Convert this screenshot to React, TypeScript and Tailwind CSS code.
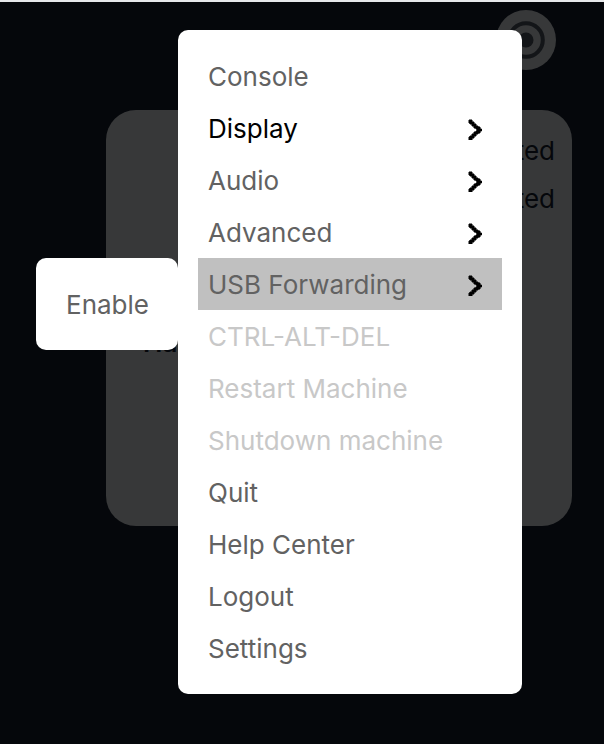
type Entry = {
  label: string;
  tone?: "active" | "disabled";
  arrow?: boolean;
  submenu?: string[];
};

const ENTRIES: Entry[] = [
  { label: "Console" },
  { label: "Display", tone: "active", arrow: true },
  { label: "Audio", arrow: true },
  { label: "Advanced", arrow: true },
  { label: "USB Forwarding", arrow: true, submenu: ["Enable"] },
  { label: "CTRL-ALT-DEL", tone: "disabled" },
  { label: "Restart Machine", tone: "disabled" },
  { label: "Shutdown machine", tone: "disabled" },
  { label: "Quit" },
  { label: "Help Center" },
  { label: "Logout" },
  { label: "Settings" },
];

const toneClass = (tone?: Entry["tone"]) => {
  if (tone === "active") return "text-black";
  if (tone === "disabled") return "text-[#c8c8c8]";
  return "text-[#626262]";
};

const Arrow = () => (
  <svg
    viewBox="0 0 16 24"
    className="mr-2 h-6 w-4 fill-black"
    aria-hidden="true"
  >
    <path d="M1 4H4V6H6V8H8V10H10V11H12V13H13.5V15H12V17H10V18H8V20H6V22H4V24H1V21H2V20H4V18H6V16H8V15H9V13H8V12H6V10H4V8H2V7H1Z" stroke="#000" strokeWidth="1" />
  </svg>
);

const MenuItem = ({ label, tone, arrow, submenu }: Entry) => (
  <li className="relative">
    <button
      disabled={tone === "disabled"}
      className={`flex h-13 w-full items-center justify-between px-2.5 text-left whitespace-nowrap ${toneClass(tone)} ${submenu ? "bg-[#c0c0c0]" : ""}`}
    >
      {label}
      {arrow && <Arrow />}
    </button>
    {submenu && (
      <ul className="absolute top-0 right-full mr-5 w-[142px] rounded-[10px] bg-white p-5">
        {submenu.map((item) => (
          <MenuItem key={item} label={item} />
        ))}
      </ul>
    )}
  </li>
);

const Target = () => (
  <svg viewBox="0 0 60 60" className="size-15" aria-hidden="true">
    <circle cx="30" cy="30" r="30" fill="#373839" />
    <circle cx="30" cy="30" r="16.8" fill="none" stroke="#131518" strokeWidth="4" />
    <circle cx="30" cy="30" r="7.5" fill="#131518" />
  </svg>
);

export default function App() {
  return (
    <div className="relative min-h-screen border-t-2 border-[#e6e8ea] bg-[#05070b] pt-2 pr-8 pl-[106px] font-['Inter',sans-serif] text-[26px]">
      <header className="flex justify-end pr-4">
        <button aria-label="Menu" className="rounded-full">
          <Target />
        </button>
      </header>

      <main className="mt-10 min-h-[416px] rounded-[30px] bg-[#373839] px-[17px] pt-[17px] leading-[48px] text-[#05070b]">
        <p className="text-right">Connected</p>
        <p className="text-right">Connected</p>
        <p className="mt-24 pl-5 font-semibold">Hac</p>
      </main>

      <nav className="absolute top-7 right-[82px] w-[344px] rounded-[10px] bg-white p-5">
        <ul>
          {ENTRIES.map((entry) => (
            <MenuItem key={entry.label} {...entry} />
          ))}
        </ul>
      </nav>
    </div>
  );
}
